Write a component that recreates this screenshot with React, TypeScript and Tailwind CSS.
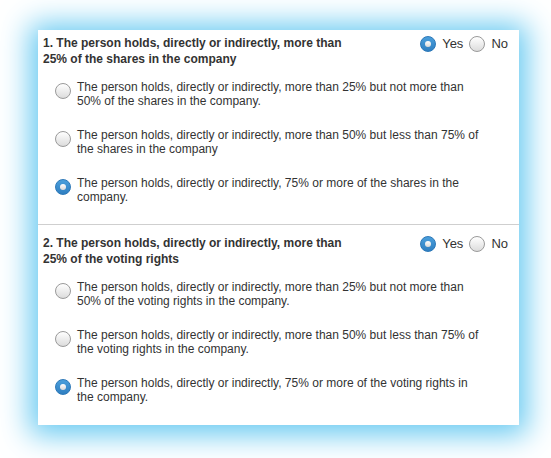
import React from 'react';

type Option = { lines: string[]; checked?: boolean };

const Radio = ({ checked }: { checked?: boolean }) =>
    checked ? (
        <span className="flex w-4 h-4 shrink-0 rounded-full bg-gradient-to-b from-[#4a9fdc] to-[#2f7fc1] border border-[#2c78b8] items-center justify-center">
            <span className="block w-[6px] h-[6px] rounded-full bg-gradient-to-b from-white to-[#d8d8d8]" />
        </span>
    ) : (
        <span className="block w-4 h-4 shrink-0 rounded-full bg-gradient-to-b from-white to-[#dcdcdc] border border-[#9a9a9a]" />
    );

const Section = ({
    title,
    options,
    top,
    border,
}: {
    title: string[];
    options: Option[];
    top: string;
    border?: boolean;
}) => (
    <div className={`${top} ${border ? 'border-t border-[#cfcfcf]' : ''} pb-[20px]`}>
        <div className="flex items-start justify-between pl-[5px] pr-[11px]">
            <h3 className="font-bold text-[12px] leading-[16px] text-[#333]">
                {title[0]}
                <br />
                {title[1]}
            </h3>
            <div className="flex items-center gap-[6px] text-[13px] leading-[16px] text-[#333] mt-[1px]">
                <Radio checked />
                <span>Yes</span>
                <Radio />
                <span>No</span>
            </div>
        </div>
        <div className="flex flex-col gap-[20px] mt-[13px] pl-[17px]">
            {options.map((o, i) => (
                <div key={i} className="flex items-start gap-[6px]">
                    <div className="mt-[3px]">
                        <Radio checked={o.checked} />
                    </div>
                    <p className="text-[12px] leading-[14px] text-[#333] whitespace-nowrap">
                        {o.lines[0]}
                        <br />
                        {o.lines[1]}
                    </p>
                </div>
            ))}
        </div>
    </div>
);

export default function App() {
    return (
        <div className="w-[551px] h-[458px] bg-white pt-[30px] pl-[38px]" style={{ fontFamily: '"Liberation Sans", Arial, sans-serif' }}>
            <div className="w-[481px] h-[395px] bg-white shadow-[0_2px_28px_8px_#66c9f1]">
                <Section
                    top="pt-[5px]"
                    title={['1. The person holds, directly or indirectly, more than', '25% of the shares in the company']}
                    options={[
                        { lines: ['The person holds, directly or indirectly, more than 25% but not more than', '50% of the shares in the company.'] },
                        { lines: ['The person holds, directly or indirectly, more than 50% but less than 75% of', 'the shares in the company'] },
                        { lines: ['The person holds, directly or indirectly, 75% or more of the shares in the', 'company.'], checked: true },
                    ]}
                />
                <Section
                    border
                    top="pt-[10px]"
                    title={['2. The person holds, directly or indirectly, more than', '25% of the voting rights']}
                    options={[
                        { lines: ['The person holds, directly or indirectly, more than 25% but not more than', '50% of the voting rights in the company.'] },
                        { lines: ['The person holds, directly or indirectly, more than 50% but less than 75% of', 'the voting rights in the company.'] },
                        { lines: ['The person holds, directly or indirectly, 75% or more of the voting rights in', 'the company.'], checked: true },
                    ]}
                />
            </div>
        </div>
    );
}
